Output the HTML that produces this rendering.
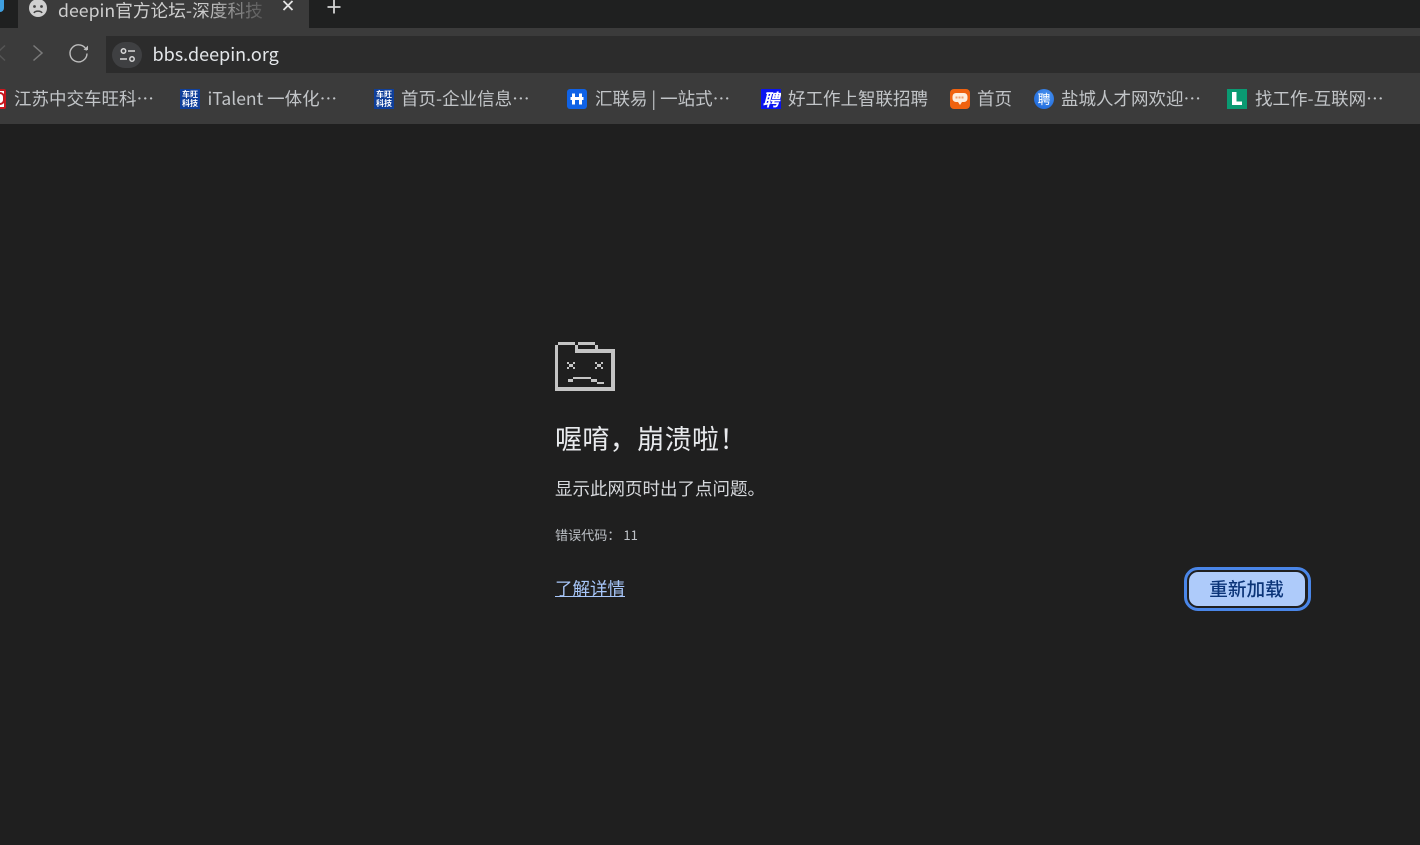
<!DOCTYPE html>
<html lang="zh-CN">
<head>
<meta charset="utf-8">
<title>deepin</title>
<style>
*{box-sizing:border-box}
html,body{margin:0;padding:0;width:1420px;height:845px;overflow:hidden;background:#1f1f1f;font-family:"Noto Sans CJK SC","Liberation Sans",sans-serif}
.abs{position:absolute;white-space:nowrap}
#strip{left:0;top:0;width:1420px;height:28px;background:#1f2020}
#toolbar{left:0;top:28px;width:1420px;height:45px;background:#3b3b3b}
#bm{left:0;top:73px;width:1420px;height:51px;background:#3b3b3b}
#tab{left:18px;top:0;width:291px;height:28px;background:#3b3b3b}
#omni{left:106px;top:36px;width:1314px;height:37px;background:#2c2c2c}
.b{font-size:17.5px;line-height:26px;color:#c2c5c8;top:86px}
.i{position:absolute;top:89px;width:20px;height:20px}
svg{position:absolute;display:block}
</style>
</head>
<body>
<div class="abs" id="strip"></div>
<div class="abs" style="left:0;top:0;width:4px;height:12px;background:#3f9fe0;border-radius:0 0 4px 0"></div>
<div class="abs" id="tab"></div>
<div class="abs" id="toolbar"></div>
<div class="abs" id="bm"></div>
<div class="abs" id="omni"></div>

<svg style="left:28px;top:0" width="20" height="20" viewBox="0 0 20 20"><circle cx="10" cy="8" r="9" fill="#d0d0d0"/><circle cx="6.5" cy="6.5" r="1.4" fill="#444"/><circle cx="13.5" cy="6.5" r="1.4" fill="#444"/><path d="M6 13c1-2.5 7-2.5 8 0" stroke="#444" stroke-width="1.6" fill="none"/></svg>
<div class="abs" style="left:58px;top:-3px;font-size:17.7px;line-height:26px;width:204px;overflow:hidden;color:#cfcfcf;-webkit-mask-image:linear-gradient(90deg,#000 70%,rgba(0,0,0,.2) 100%)">deepin官方论坛-深度科技社区</div>
<svg style="left:282px;top:0" width="12" height="12" viewBox="0 0 12 12"><path d="M1.5 1l9 9M10.5 1l-9 9" stroke="#e4e4e4" stroke-width="1.8"/></svg>
<svg style="left:326px;top:0" width="16" height="14" viewBox="0 0 16 14"><path d="M8 0v13.5M1.5 7h13" stroke="#d4d4d4" stroke-width="1.8"/></svg>

<svg style="left:0;top:44px" width="6" height="18" viewBox="0 0 6 18"><path d="M5 1.500L-3 9l8 7.500" stroke="#555" stroke-width="1.500" fill="none"/></svg>
<svg style="left:32px;top:44px" width="12" height="18" viewBox="0 0 12 18"><path d="M1.500 1.500L10 9l-8.500 7.500" stroke="#7a7a7a" stroke-width="1.500" fill="none"/></svg>
<svg style="left:68px;top:43px" width="22" height="22" viewBox="0 0 22 22"><path d="M18.500 7.500A8.500 8.500 0 1 0 19 10.500" stroke="#bdbdbd" stroke-width="1.400" fill="none"/><path d="M15.500 7h4.500V2.500z" fill="#bdbdbd"/></svg>
<div class="abs" style="left:112px;top:42px;width:30px;height:26px;border-radius:13px;background:#3f4042"></div>
<svg style="left:119px;top:47px" width="18" height="17" viewBox="0 0 18 17"><circle cx="4.500" cy="4" r="2.200" stroke="#d8d8d8" stroke-width="1.500" fill="none"/><path d="M9 4h7M1 12h7" stroke="#d8d8d8" stroke-width="1.500"/><circle cx="13" cy="12" r="2.200" stroke="#d8d8d8" stroke-width="1.500" fill="none"/></svg>
<div class="abs" style="left:152.5px;top:41px;font-size:18px;line-height:27px;color:#e4e7ea">bbs.deepin.org</div>

<div class="abs" style="left:-14px;top:89px;width:20px;height:20px;background:#fff;border:2px solid #c8161d;border-radius:2px"></div>
<div class="abs" style="left:-6px;top:92px;width:11px;height:13px;border:2px solid #c8161d;border-radius:5px"></div>
<div class="abs b" style="left:14px">江苏中交车旺科…</div>

<div class="i" style="left:180px;background:#0f3f9a"></div>
<div class="abs" style="left:180px;top:89px;width:20px;height:20px;color:#fff;font-size:8px;line-height:9px;text-align:center;font-weight:700;padding-top:1px;white-space:normal">车旺<br>科技</div>
<div class="abs b" style="left:207.500px">iTalent 一体化…</div>

<div class="i" style="left:374px;background:#0f3f9a"></div>
<div class="abs" style="left:374px;top:89px;width:20px;height:20px;color:#fff;font-size:8px;line-height:9px;text-align:center;font-weight:700;padding-top:1px;white-space:normal">车旺<br>科技</div>
<div class="abs b" style="left:401px">首页-企业信息…</div>

<svg style="left:567px;top:89px" width="20" height="20" viewBox="0 0 20 20"><rect width="20" height="20" rx="3" fill="#0f62e6"/><path d="M6.500 4.500v11M13.500 4.500v11M3.500 9.500h13" stroke="#fff" stroke-width="3" fill="none"/></svg>
<div class="abs b" style="left:595px">汇联易 | 一站式…</div>

<div class="i" style="left:761px;background:#0a14f0"></div>
<div class="abs" style="left:761px;top:89px;width:20px;height:20px;color:#fff;font-size:17px;line-height:20px;text-align:center;font-weight:700;font-style:italic;overflow:hidden">聘</div>
<div class="abs b" style="left:788px">好工作上智联招聘</div>

<div class="i" style="left:950px;background:#f0620f;border-radius:4px"></div>
<svg style="left:950px;top:89px" width="20" height="20" viewBox="0 0 20 20"><path d="M6 4h8a3.500 3.500 0 0 1 3.500 3.500v2A3.500 3.500 0 0 1 14 13h-2l-2 3-2-3H6a3.500 3.500 0 0 1-3.500-3.500v-2A3.500 3.500 0 0 1 6 4z" fill="#fdeee0"/><path d="M5.500 8.500h9" stroke="#f0a070" stroke-width="2" stroke-dasharray="2 1"/></svg>
<div class="abs b" style="left:977px">首页</div>

<div class="i" style="left:1034px;background:radial-gradient(circle at 60% 35%,#4b95f0,#1560d8);border-radius:50%"></div>
<div class="abs" style="left:1034px;top:89px;width:20px;height:20px;color:#fff;font-size:13px;line-height:20px;text-align:center">聘</div>
<div class="abs b" style="left:1061px">盐城人才网欢迎…</div>

<div class="i" style="left:1227px;background:#0a9a72"></div>
<svg style="left:1227px;top:89px" width="20" height="20" viewBox="0 0 20 20"><path d="M5 3h4.500v9.500H15V16H5z" fill="#fff"/></svg>
<div class="abs b" style="left:1255px">找工作-互联网…</div>

<svg style="left:555px;top:341px" width="60" height="50" viewBox="0 0 60 50" shape-rendering="crispEdges" fill="#c4c4c4">
<rect x="0" y="4" width="3" height="46"/><rect x="0" y="46" width="60" height="4"/><rect x="56" y="8" width="4" height="42"/>
<rect x="3" y="1" width="17" height="3"/><rect x="23" y="1" width="17" height="3"/><rect x="20" y="4" width="3" height="8"/><rect x="40" y="4" width="3" height="4"/><rect x="20" y="8" width="36" height="4"/>
<path d="M12 21h2v2h-2zM18 21h2v2h-2zM14 23h4v3h-4zM12 26h2v2h-2zM18 26h2v2h-2z"/>
<path d="M40 21h2v2h-2zM46 21h2v2h-2zM42 23h4v3h-4zM40 26h2v2h-2zM46 26h2v2h-2z"/>
<rect x="13" y="38" width="5" height="3"/><rect x="18" y="36" width="18" height="2"/><rect x="36" y="38" width="6" height="3"/><rect x="42" y="41" width="7" height="2"/>
</svg>

<div class="abs" style="left:555px;top:418px;font-size:27px;line-height:40px;color:#e8eaed;letter-spacing:.4px">喔唷，崩溃啦！</div>
<div class="abs" style="left:555px;top:476px;font-size:17.5px;line-height:26px;color:#d6d8dc">显示此网页时出了点问题。</div>
<div class="abs" style="left:555px;top:525px;font-size:13.1px;line-height:20px;color:#bdc1c6">错误代码： 11</div>
<div class="abs" style="left:555px;top:576px;font-size:17.5px;line-height:26px;color:#a8c7fa;text-decoration:underline">了解详情</div>

<div class="abs" style="left:1184px;top:567px;width:127px;height:44px;border:3px solid #4a86e8;border-radius:14px;background:#1f1f1f"></div>
<div class="abs" style="left:1189px;top:572px;width:116px;height:34px;border-radius:9px;background:#aecbfa"></div>
<div class="abs" style="left:1189px;top:572px;width:115px;height:34px;color:#0b3478;font-size:18.67px;line-height:34px;text-align:center;font-weight:500">重新加载</div>
</body>
</html>
